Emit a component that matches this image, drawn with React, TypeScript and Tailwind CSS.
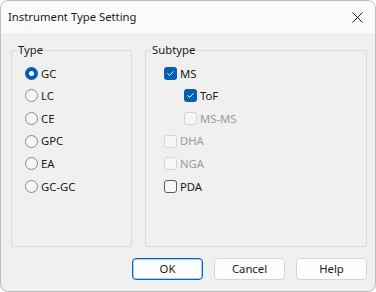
import React from "react";

const font = { fontFamily: '"Noto Sans", "Segoe UI", sans-serif' };

function Radio({ label, checked }: { label: string; checked?: boolean }) {
  return (
    <div className="flex h-[22.6px] items-center">
      {checked ? (
        <div className="flex h-[13px] w-[13px] items-center justify-center rounded-full bg-[#005fb8]">
          <div className="h-[5px] w-[5px] rounded-full bg-white" />
        </div>
      ) : (
        <div className="h-[13px] w-[13px] rounded-full border border-[#8a8a8a] bg-[#f6f6f6]" />
      )}
      <span className="ml-[3px] text-[11.3px] leading-none text-[#1a1a1a]">{label}</span>
    </div>
  );
}

function Check({
  label,
  checked,
  disabled,
  indent,
}: {
  label: string;
  checked?: boolean;
  disabled?: boolean;
  indent?: boolean;
}) {
  return (
    <div className={`flex h-[22.6px] items-center ${indent ? "pl-[20px]" : ""}`}>
      {checked ? (
        <div className="flex h-[13px] w-[13px] items-center justify-center rounded-[3px] bg-[#005fb8]">
          <svg width="9" height="9" viewBox="0 0 9 9">
            <path d="M1.8 4.7 L3.6 6.4 L7.2 2.6" fill="none" stroke="white" strokeWidth="1" strokeLinecap="round" strokeLinejoin="round" />
          </svg>
        </div>
      ) : disabled ? (
        <div className="h-[13px] w-[13px] rounded-[3px] border border-[#d4d4d4] bg-[#f7f7f7]" />
      ) : (
        <div className="h-[13px] w-[13px] rounded-[3px] border border-[#5c5c5c] bg-[#f7f7f7]" />
      )}
      <span
        className={`ml-[3px] text-[11.3px] leading-none ${disabled ? "text-[#9a9a9a]" : "text-[#1a1a1a]"}`}
      >
        {label}
      </span>
    </div>
  );
}

function Group({
  title,
  className,
  children,
}: {
  title: string;
  className: string;
  children: React.ReactNode;
}) {
  return (
    <div className={`relative h-[197px] rounded-[2px] border border-[#dadada] ${className}`}>
      <span className="absolute left-[5px] top-[-8px] bg-[#f0f0f0] px-[1px] text-[11.3px] leading-[14px] text-[#1a1a1a]">
        {title}
      </span>
      {children}
    </div>
  );
}

function Btn({ label, primary }: { label: string; primary?: boolean }) {
  return (
    <div
      className={`flex h-[22px] w-[71px] items-center justify-center rounded-[4px] bg-[#fdfdfd] text-[11.3px] text-[#1a1a1a] ${
        primary ? "border border-[#0067c0] shadow-[inset_0_0_0_0.5px_#5aa0e0]" : "border border-[#d6d6d6]"
      }`}
    >
      {label}
    </div>
  );
}

export default function App() {
  return (
    <div className="h-[292px] w-[376px] bg-white" style={font}>
      <div className="flex h-[292px] w-[376px] flex-col overflow-hidden rounded-[8px] border border-[#bcbcbc] bg-[#f0f0f0]">
        <div className="flex h-[32px] shrink-0 items-center justify-between bg-[#fafafa] pl-[7px] pr-[12px]">
          <span className="text-[11.3px] text-[#1a1a1a]">Instrument Type Setting</span>
          <svg width="11" height="11" viewBox="0 0 11 11">
            <path d="M0.5 0.5 L10.5 10.5 M10.5 0.5 L0.5 10.5" stroke="#1a1a1a" strokeWidth="1" />
          </svg>
        </div>
        <div className="flex gap-[13px] pl-[10px] pt-[17px]">
          <Group title="Type" className="w-[121px]">
            <div className="flex flex-col pl-[13px] pt-[11px]">
              <Radio label="GC" checked />
              <Radio label="LC" />
              <Radio label="CE" />
              <Radio label="GPC" />
              <Radio label="EA" />
              <Radio label="GC-GC" />
            </div>
          </Group>
          <Group title="Subtype" className="w-[222px]">
            <div className="flex flex-col pl-[18px] pt-[11px]">
              <Check label="MS" checked />
              <Check label="ToF" checked indent />
              <Check label="MS-MS" disabled indent />
              <Check label="DHA" disabled />
              <Check label="NGA" disabled />
              <Check label="PDA" />
            </div>
          </Group>
        </div>
        <div className="flex justify-end gap-[11px] pr-[8px] pt-[11px]">
          <Btn label="OK" primary />
          <Btn label="Cancel" />
          <Btn label="Help" />
        </div>
      </div>
    </div>
  );
}
